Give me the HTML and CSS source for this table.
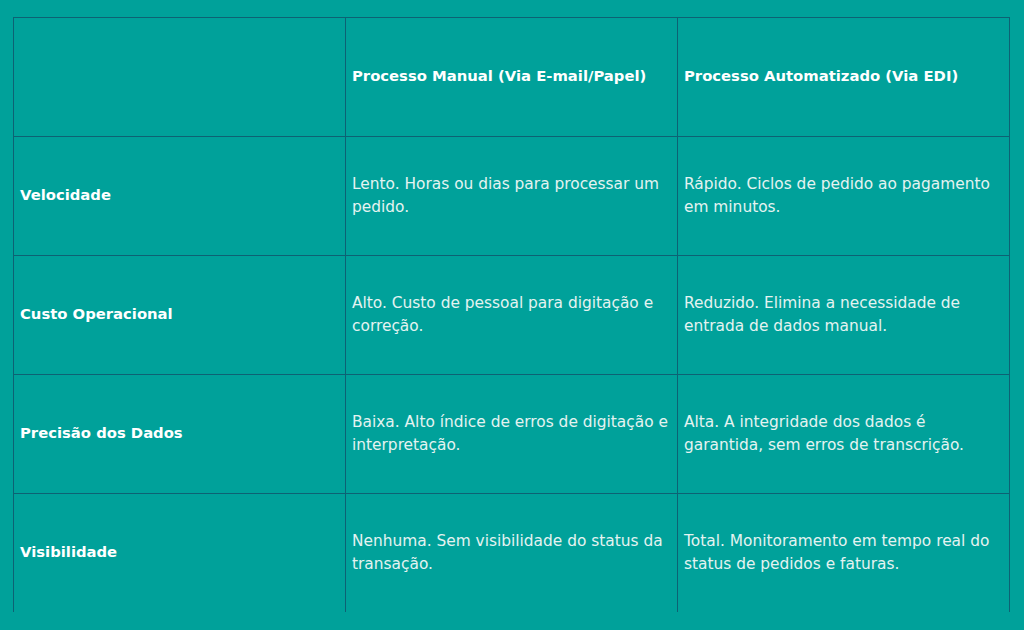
FILE: index.html
```html
<!DOCTYPE html>
<html lang="pt">
<head>
<meta charset="utf-8">
<title>Manual vs EDI</title>
<link rel="stylesheet" href="styles.css">
</head>
<body>
<div class="wrap">
<table class="cmp">
<tr class="head">
<th class="lbl"></th>
<th>Processo Manual (Via E-mail/Papel)</th>
<th>Processo Automatizado (Via EDI)</th>
</tr>
<tr>
<th class="lbl">Velocidade</th>
<td>Lento. Horas ou dias para processar um pedido.</td>
<td>Rápido. Ciclos de pedido ao pagamento em minutos.</td>
</tr>
<tr>
<th class="lbl">Custo Operacional</th>
<td>Alto. Custo de pessoal para digitação e correção.</td>
<td>Reduzido. Elimina a necessidade de entrada de dados manual.</td>
</tr>
<tr>
<th class="lbl">Precisão dos Dados</th>
<td>Baixa. Alto índice de erros de digitação e interpretação.</td>
<td>Alta. A integridade dos dados é garantida, sem erros de transcrição.</td>
</tr>
<tr class="last">
<th class="lbl">Visibilidade</th>
<td>Nenhuma. Sem visibilidade do status da transação.</td>
<td>Total. Monitoramento em tempo real do status de pedidos e faturas.</td>
</tr>
</table>
</div>
</body>
</html>
```
FILE: styles.css
```css
html, body {
  margin: 0;
  padding: 0;
  background: #00a19a;
  height: 630px;
  overflow: hidden;
}
.wrap {
  padding: 17px 0 0 13px;
}
.cmp {
  border-collapse: collapse;
  table-layout: fixed;
  width: 997px;
  font-family: "DejaVu Sans", "Open Sans", sans-serif;
  color: #ffffff;
}
.cmp th, .cmp td {
  border: 1px solid #0d6274;
  height: 118px;
  padding: 0 4px 0 6px;
  vertical-align: middle;
  text-align: left;
  line-height: 23px;
}
.cmp th {
  font-weight: 700;
  font-size: 14.8px;
  color: #ffffff;
  padding-bottom: 3px;
  height: 115px;
}
.cmp td {
  font-weight: 400;
  font-size: 15.4px;
  color: #e4f3f1;
}
.cmp tr.last th, .cmp tr.last td {
  border-bottom: none;
}
```
